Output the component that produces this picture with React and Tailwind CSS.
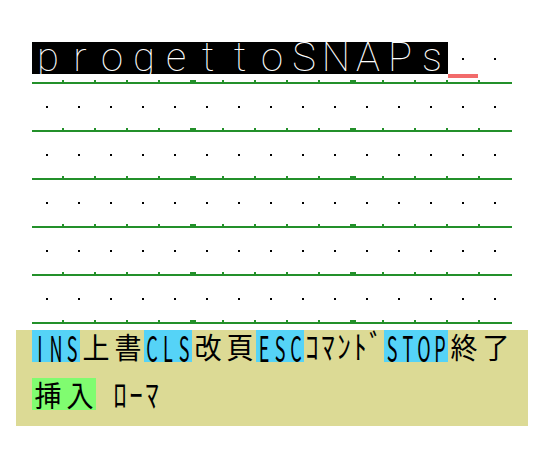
import React from "react";

const GREEN = "bg-[#23902a]";

function DotCell() {
  return (
    <div className="w-[32px] h-[32px] shrink-0 pl-[14px] pt-[16px]">
      <div className="w-[2px] h-[2px] bg-black" />
    </div>
  );
}

function TextCell({ ch }) {
  return (
    <div className="w-[32px] h-[32px] shrink-0 bg-black flex justify-center">
      <span className="font-['Roboto',sans-serif] font-thin text-[40px] leading-[32px] text-white">
        {ch}
      </span>
    </div>
  );
}

function Ticks() {
  return (
    <div className="flex h-[2px]">
      {Array.from({ length: 14 }).map((_, i) => (
        <div key={i} className="w-[32px] shrink-0 flex justify-end">
          {i === 4 || i === 9 ? (
            <div className="w-[6px] h-[2px] -mr-[4px] shrink-0 bg-[#23902a]" />
          ) : (
            <div className="w-[2px] h-[2px] shrink-0 bg-[#23902a]" />
          )}
        </div>
      ))}
    </div>
  );
}

function GridRow({ first }) {
  const text = "progettoSNAPs".split("");
  return (
    <div className="flex flex-col h-[48px] pt-[6px]">
      <div className="flex h-[32px]">
        {first
          ? [
              ...text.map((c, i) => <TextCell key={i} ch={c} />),
              <DotCell key="a" />,
              <DotCell key="b" />,
            ]
          : Array.from({ length: 15 }).map((_, i) => <DotCell key={i} />)}
      </div>
      <div className="h-[4px] flex">
        {first && <div className="ml-[416px] w-[30px] h-[4px] bg-[#f26b6b]" />}
      </div>
      <div className="h-[2px]" />
      <Ticks />
      <div className={`h-[2px] w-[480px] ${GREEN}`} />
    </div>
  );
}

function H({ ch, hl, kana }) {
  return (
    <span
      className={`inline-flex w-[16px] h-[32px] shrink-0 items-center justify-center ${
        hl === "c" ? "bg-[#55d3f7]" : hl === "g" ? "bg-[#80fc70]" : ""
      }`}
    >
      <span
        className={`inline-block font-['Noto_Sans_CJK_JP',sans-serif] leading-[16px] text-black ${
          kana ? "text-[27px] scale-y-[1.2]" : "text-[18px] scale-y-[1.95]"
        }`}
      >
        {ch}
      </span>
    </span>
  );
}

function F({ ch, hl }) {
  return (
    <span
      className={`inline-flex w-[32px] h-[32px] shrink-0 items-center justify-center ${
        hl === "g" ? "bg-[#80fc70]" : ""
      }`}
    >
      <span className="inline-block font-['Noto_Sans_CJK_JP',sans-serif] text-[27px] leading-[27px] text-black scale-y-[1.08]">
        {ch}
      </span>
    </span>
  );
}

export default function App() {
  return (
    <div className="w-[544px] h-[466px] bg-white overflow-hidden">
      <div className="pt-[36px] pl-[32px] flex flex-col">
        {[0, 1, 2, 3, 4, 5].map((r) => (
          <GridRow key={r} first={r === 0} />
        ))}
      </div>
      <div className="mt-[6px] ml-[16px] w-[512px] h-[96px] bg-[#dcda95] px-[16px] flex flex-col gap-[16px]">
        <div className="flex h-[32px]">
          <H ch="I" hl="c" />
          <H ch="N" hl="c" />
          <H ch="S" hl="c" />
          <F ch="上" />
          <F ch="書" />
          <H ch="C" hl="c" />
          <H ch="L" hl="c" />
          <H ch="S" hl="c" />
          <F ch="改" />
          <F ch="頁" />
          <H ch="E" hl="c" />
          <H ch="S" hl="c" />
          <H ch="C" hl="c" />
          <H ch="ｺ" kana />
          <H ch="ﾏ" kana />
          <H ch="ﾝ" kana />
          <H ch="ﾄ" kana />
          <H ch="ﾞ" kana />
          <H ch="S" hl="c" />
          <H ch="T" hl="c" />
          <H ch="O" hl="c" />
          <H ch="P" hl="c" />
          <F ch="終" />
          <F ch="了" />
        </div>
        <div className="flex h-[32px]">
          <F ch="挿" hl="g" />
          <F ch="入" hl="g" />
          <H ch=" " />
          <H ch="ﾛ" kana />
          <H ch="ｰ" kana />
          <H ch="ﾏ" kana />
        </div>
      </div>
    </div>
  );
}
